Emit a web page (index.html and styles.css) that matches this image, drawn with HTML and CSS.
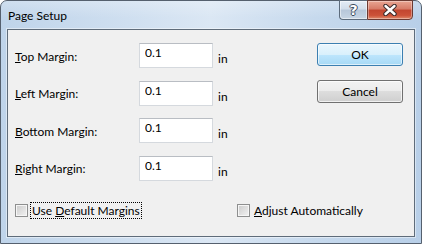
FILE: index.html
```html
<!DOCTYPE html>
<html lang="en">
<head>
    <meta charset="UTF-8"/>
    <title>Page Setup</title>
    <link rel="stylesheet" href="styles.css">
</head>
<body>
<div class="window">
    <div class="titlebar">
        <span class="title">Page Setup</span>
        <div class="caption-buttons">
            <button class="cap help">?</button>
            <button class="cap close">
                <svg width="14" height="12" viewBox="0 0 14 12">
                    <path d="M2.5 2 L11.5 10 M11.5 2 L2.5 10" stroke="#3a2a2a" stroke-width="4.4" stroke-linecap="round"/>
                    <path d="M2.5 2 L11.5 10 M11.5 2 L2.5 10" stroke="#ffffff" stroke-width="2.4" stroke-linecap="round"/>
                </svg>
            </button>
        </div>
    </div>
    <div class="client">
        <div class="top">
            <div class="fields">
                <label class="field-label"><u>T</u>op Margin:</label>
                <input class="textbox" type="text" value="0.1">
                <span class="unit">in</span>

                <label class="field-label"><u>L</u>eft Margin:</label>
                <input class="textbox" type="text" value="0.1">
                <span class="unit">in</span>

                <label class="field-label"><u>B</u>ottom Margin:</label>
                <input class="textbox" type="text" value="0.1">
                <span class="unit">in</span>

                <label class="field-label"><u>R</u>ight Margin:</label>
                <input class="textbox" type="text" value="0.1">
                <span class="unit">in</span>
            </div>
            <div class="actions">
                <button class="btn default">OK</button>
                <button class="btn">Cancel</button>
            </div>
        </div>
        <div class="options">
            <label class="check first"><input type="checkbox"><span class="check-text focus">Use <u>D</u>efault Margins</span></label>
            <label class="check"><input type="checkbox"><span class="check-text"><u>A</u>djust Automatically</span></label>
        </div>
    </div>
</div>
</body>
</html>
```

FILE: styles.css
```css
* {
    margin: 0;
    padding: 0;
    box-sizing: border-box;
}

body {
    background: #ffffff;
    font-family: Lato, 'Noto Sans', sans-serif;
    font-size: 12px;
    color: #000;
}

.window {
    width: 422px;
    height: 244px;
    display: flex;
    flex-direction: column;
    border: 1px solid #55606e;
    border-radius: 7px 7px 0 0;
    background: linear-gradient(90deg, #bfd4ea 0%, #cfdff0 30%, #dbe7f4 50%, #c6d9ed 75%, #b8cfe8 100%);
}

/* title bar */
.titlebar {
    height: 28px;
    display: flex;
    align-items: flex-start;
    padding-left: 7px;
    background: linear-gradient(180deg, rgba(255, 255, 255, 0.25), rgba(255, 255, 255, 0) 60%);
    border-radius: 6px 6px 0 0;
}

.title {
    margin-top: 7px;
    line-height: 16px;
}

.caption-buttons {
    margin-left: auto;
    margin-right: 8px;
    margin-top: -1px;
    display: flex;
}

.cap {
    height: 20px;
    border: 1px solid #5c6b7c;
    font-family: 'DejaVu Sans', sans-serif;
    display: flex;
    align-items: center;
    justify-content: center;
}

.cap.help {
    width: 28px;
    border-right: none;
    border-radius: 0 0 0 4px;
    background: linear-gradient(180deg, #e4ecf5 0%, #d2ddea 45%, #b7c7d9 50%, #c7d5e4 100%);
    box-shadow: inset 0 0 0 1px rgba(255, 255, 255, 0.5);
    color: #fff;
    font-weight: bold;
    font-size: 14px;
    text-shadow: 1px 0 #3b4a5c, -1px 0 #3b4a5c, 0 1px #3b4a5c, 0 -1px #3b4a5c;
}

.cap.close {
    width: 46px;
    border-color: #6b3a32;
    border-radius: 0 0 4px 0;
    background: linear-gradient(180deg, #e9a593 0%, #d67a66 45%, #c2452f 50%, #cc5238 80%, #df8a6c 100%);
    box-shadow: inset 0 0 0 1px rgba(255, 255, 255, 0.35);
}

/* client area */
.client {
    flex: 1;
    margin: 0 6px 6px;
    border: 1px solid #5f6c7a;
    box-shadow: 0 0 0 1px rgba(255, 255, 255, 0.45);
    background: #f0f0f0;
    padding: 13px 0 0 7px;
}

.top {
    display: flex;
}

.fields {
    width: 302px;
    display: grid;
    grid-template-columns: 124px 74px 1fr;
    grid-auto-rows: 25px;
    row-gap: 12.67px;
}

.field-label {
    align-self: center;
    line-height: 16px;
    padding-top: 2px;
}

.textbox {
    width: 74px;
    height: 25px;
    border: 1px solid #d5d9de;
    border-top-color: #b9bdc3;
    background: #fff;
    font: inherit;
    padding: 1px 5px 7px;
    outline: none;
}

.unit {
    align-self: end;
    line-height: 16px;
    padding-left: 5px;
    padding-bottom: 1px;
}

.actions {
    width: 86px;
    display: flex;
    flex-direction: column;
    gap: 14px;
}

.btn {
    height: 23px;
    font: inherit;
    color: #000;
    border: 1px solid #707070;
    border-radius: 3px;
    background: linear-gradient(180deg, #f2f2f2 0%, #ebebeb 50%, #dddddd 50%, #cfcfcf 100%);
    box-shadow: inset 0 0 0 1px rgba(255, 255, 255, 0.7);
}

.btn.default {
    border-color: #3c7fb1;
    background: linear-gradient(180deg, #eaf6fd 0%, #d9f0fc 50%, #bee6fd 50%, #a7d9f5 100%);
    box-shadow: inset 0 0 0 1px rgba(255, 255, 255, 0.6);
}

/* checkboxes */
.options {
    margin-top: 21px;
    height: 17px;
    display: flex;
    align-items: center;
}

.check {
    display: flex;
    align-items: center;
}

.check.first {
    width: 222px;
}

.check input {
    appearance: none;
    width: 13px;
    height: 13px;
    margin-right: 2px;
    border: 1px solid #8e8f8f;
    background: linear-gradient(135deg, #cbcbcb 0%, #f3f3f3 100%);
    box-shadow: inset 0 0 0 1px #f6f6f6;
}

.check-text {
    line-height: 15px;
    padding: 0 1px;
    border: 1px solid transparent;
}

.check-text.focus {
    border: 1px dotted #000;
}
```
